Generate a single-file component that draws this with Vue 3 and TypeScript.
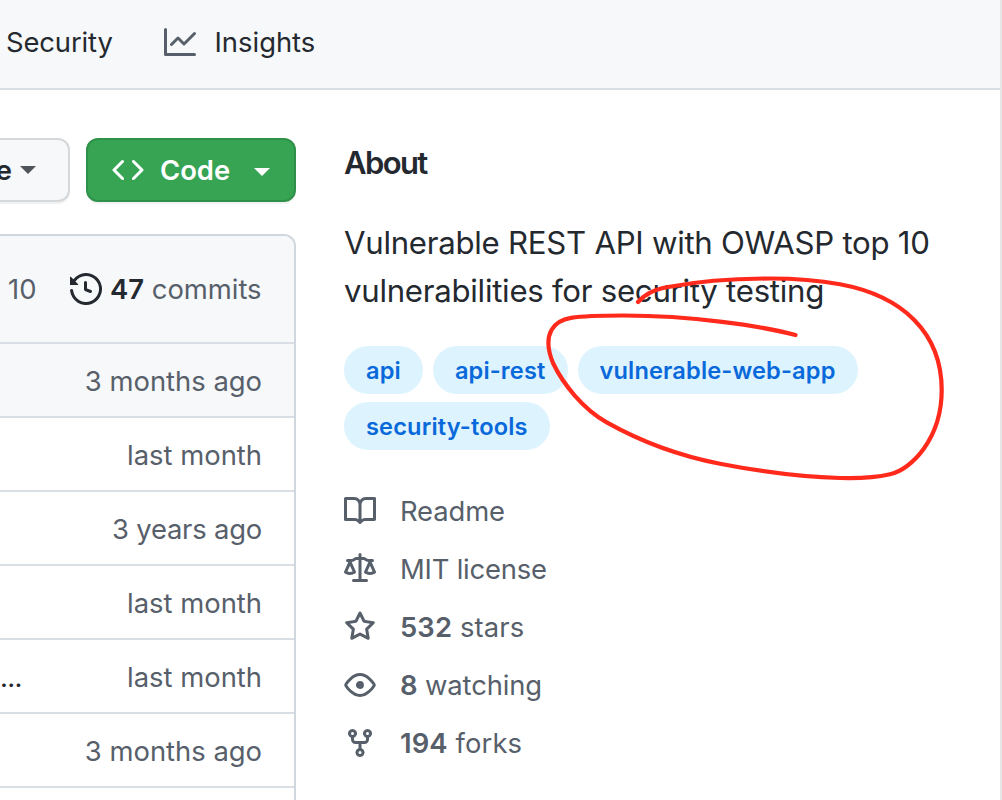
<script setup lang="ts">
const icons = {
  graph: 'M1.5 1.75V13.5h13.75a.75.75 0 0 1 0 1.5H.75a.75.75 0 0 1-.75-.75V1.75a.75.75 0 0 1 1.5 0Zm14.28 2.53-5.25 5.25a.75.75 0 0 1-1.06 0L7 7.06 4.28 9.78a.751.751 0 0 1-1.042-.018.751.751 0 0 1-.018-1.042l3.25-3.25a.75.75 0 0 1 1.06 0L10 7.94l4.72-4.72a.751.751 0 0 1 1.042.018.751.751 0 0 1 .018 1.042Z',
  code: 'm11.28 3.22 4.25 4.25a.75.75 0 0 1 0 1.06l-4.25 4.25a.749.749 0 0 1-1.275-.326.749.749 0 0 1 .215-.734L13.94 8l-3.72-3.72a.749.749 0 0 1 .326-1.275.749.749 0 0 1 .734.215Zm-6.56 0a.751.751 0 0 1 1.042.018.751.751 0 0 1 .018 1.042L2.06 8l3.72 3.72a.749.749 0 0 1-.326 1.275.749.749 0 0 1-.734-.215L.47 8.53a.75.75 0 0 1 0-1.06Z',
  history: 'm.427 1.927 1.215 1.215a8.002 8.002 0 1 1-1.6 5.685.75.75 0 1 1 1.493-.154 6.5 6.5 0 1 0 1.18-4.458l1.358 1.358A.25.25 0 0 1 3.896 6H.25A.25.25 0 0 1 0 5.75V2.104a.25.25 0 0 1 .427-.177ZM7.75 4a.75.75 0 0 1 .75.75v2.992l2.028.812a.75.75 0 0 1-.557 1.392l-2.5-1A.751.751 0 0 1 7 8.25v-3.5A.75.75 0 0 1 7.75 4Z',
  book: 'M0 1.75A.75.75 0 0 1 .75 1h4.253c1.227 0 2.317.59 3 1.501A3.743 3.743 0 0 1 11.006 1h4.245a.75.75 0 0 1 .75.75v10.5a.75.75 0 0 1-.75.75h-4.507a2.25 2.25 0 0 0-1.591.659l-.622.621a.75.75 0 0 1-1.06 0l-.622-.621A2.25 2.25 0 0 0 5.258 13H.75a.75.75 0 0 1-.75-.75Zm7.251 10.324.004-5.073-.002-2.253A2.25 2.25 0 0 0 5.003 2.5H1.5v9h3.757a3.75 3.75 0 0 1 1.994.574ZM8.755 4.75l-.004 7.322a3.752 3.752 0 0 1 1.992-.572H14.5v-9h-3.495a2.25 2.25 0 0 0-2.25 2.25Z',
  law: 'M8.75.75V2h.985c.304 0 .603.08.867.231l1.29.736c.038.022.08.033.124.033h2.234a.75.75 0 0 1 0 1.5h-.427l2.111 4.692a.75.75 0 0 1-.154.838l-.53-.53.529.531-.001.002-.002.002-.006.006-.006.005-.01.01-.045.04c-.21.176-.441.327-.686.45C14.556 10.78 13.88 11 13 11a4.498 4.498 0 0 1-2.023-.454 3.544 3.544 0 0 1-.686-.45l-.045-.04-.016-.015-.006-.006-.004-.004v-.001a.75.75 0 0 1-.154-.838L12.178 4.5h-.162c-.305 0-.604-.079-.868-.231l-1.29-.736a.245.245 0 0 0-.124-.033H8.75V13h2.5a.75.75 0 0 1 0 1.5h-6.5a.75.75 0 0 1 0-1.5h2.5V3.5h-.984a.245.245 0 0 0-.124.033l-1.289.737c-.265.15-.564.23-.869.23h-.162l2.112 4.692a.75.75 0 0 1-.154.838l-.53-.53.529.531-.001.002-.002.002-.006.006-.016.015-.045.04c-.21.176-.441.327-.686.45C4.556 10.78 3.88 11 3 11a4.498 4.498 0 0 1-2.023-.454 3.544 3.544 0 0 1-.686-.45l-.045-.04-.016-.015-.006-.006-.004-.004v-.001a.75.75 0 0 1-.154-.838L2.178 4.5H1.75a.75.75 0 0 1 0-1.5h2.234a.249.249 0 0 0 .125-.033l1.288-.737c.265-.15.564-.23.869-.23h.984V.75a.75.75 0 0 1 1.5 0Zm2.945 8.477c.285.135.718.273 1.305.273s1.02-.138 1.305-.273L13 6.327Zm-10 0c.285.135.718.273 1.305.273s1.02-.138 1.305-.273L3 6.327Z',
  star: 'M8 .25a.75.75 0 0 1 .673.418l1.882 3.815 4.21.612a.75.75 0 0 1 .416 1.279l-3.046 2.97.719 4.192a.751.751 0 0 1-1.088.791L8 12.347l-3.766 1.98a.75.75 0 0 1-1.088-.79l.72-4.194L.818 6.374a.75.75 0 0 1 .416-1.28l4.21-.611L7.327.668A.75.75 0 0 1 8 .25Zm0 2.445L6.615 5.5a.75.75 0 0 1-.564.41l-3.097.45 2.24 2.184a.75.75 0 0 1 .216.664l-.528 3.084 2.769-1.456a.75.75 0 0 1 .698 0l2.77 1.456-.53-3.084a.75.75 0 0 1 .216-.664l2.24-2.183-3.096-.45a.75.75 0 0 1-.564-.41L8 2.694Z',
  eye: 'M8 2c1.981 0 3.671.992 4.933 2.078 1.27 1.091 2.187 2.345 2.637 3.023a1.62 1.62 0 0 1 0 1.798c-.45.678-1.367 1.932-2.637 3.023C11.67 13.008 9.981 14 8 14c-1.981 0-3.671-.992-4.933-2.078C1.797 10.83.88 9.576.43 8.898a1.62 1.62 0 0 1 0-1.798c.45-.677 1.367-1.931 2.637-3.022C4.33 2.992 6.019 2 8 2ZM1.679 7.932a.12.12 0 0 0 0 .136c.411.622 1.241 1.75 2.366 2.717C5.176 11.758 6.527 12.5 8 12.5c1.473 0 2.825-.742 3.955-1.715 1.124-.967 1.954-2.096 2.366-2.717a.12.12 0 0 0 0-.136c-.412-.621-1.242-1.75-2.366-2.717C10.824 4.242 9.473 3.5 8 3.5c-1.473 0-2.825.742-3.955 1.715-1.124.967-1.954 2.096-2.366 2.717ZM8 10a2 2 0 1 1-.001-3.999A2 2 0 0 1 8 10Z',
  fork: 'M5 5.372v.878c0 .414.336.75.75.75h4.5a.75.75 0 0 0 .75-.75v-.878a2.25 2.25 0 1 1 1.5 0v.878a2.25 2.25 0 0 1-2.25 2.25h-1.5v2.128a2.251 2.251 0 1 1-1.5 0V8.5h-1.5A2.25 2.25 0 0 1 3.5 6.25v-.878a2.25 2.25 0 1 1 1.5 0ZM5 3.25a.75.75 0 1 0-1.5 0 .75.75 0 0 0 1.5 0Zm6.75.75a.75.75 0 1 0 0-1.5.75.75 0 0 0 0 1.5Zm-3 8.75a.75.75 0 1 0-1.5 0 .75.75 0 0 0 1.5 0Z',
}

interface FileRow {
  message: string
  age: string
  tight?: boolean
}

const files: FileRow[] = [
  { message: '', age: '3 months ago' },
  { message: '', age: 'last month' },
  { message: '', age: '3 years ago', tight: true },
  { message: '', age: 'last month' },
  { message: '...', age: 'last month' },
  { message: '', age: '3 months ago' },
  { message: '', age: '' },
]

const topics = ['api', 'api-rest', 'vulnerable-web-app', 'security-tools']

const facts = [
  { icon: icons.book, count: '', label: 'Readme', key: 'readme' },
  { icon: icons.law, count: '', label: 'MIT license', key: 'license' },
  { icon: icons.star, count: '532', label: 'stars', key: 'stars' },
  { icon: icons.eye, count: '8', label: 'watching', key: 'watching' },
  { icon: icons.fork, count: '194', label: 'forks', key: 'forks' },
]

// Hand-drawn loop around the highlighted topic.
const loopPath = [
  'M638 302C646 293 655 289.5 668 287',
  'C700 281 735 278.5 770 278.5',
  'C795 278.5 820 280.6 840 284.3',
  'C903 296 941.7 333 941.7 390',
  'C941.7 438 912 469.2 890 474.3',
  'C874 478 858 478.5 840 478',
  'C800 477 760 471.5 720 463.7',
  'C678 455.5 640 441 606.7 422.3',
  'C583 409 563 384 553 363',
  'C548.5 352 546.5 339 551.5 330',
  'C556 322 563 319 571 317.8',
  'C585 315.7 604 315.5 623 315.5',
  'C655 315.5 688 317.5 720 321.7',
  'C748 325 775 329.5 795.5 335',
].join('')
</script>

<template>
  <div class="page">
    <nav class="tabs">
      <span class="security">Security</span>
      <svg class="icon muted" viewBox="0 0 16 16"><path :d="icons.graph" /></svg>
      <span class="insights">Insights</span>
    </nav>
    <div class="content">
      <main class="left">
        <div class="actions">
          <button class="btn file-btn"><span>e</span><i class="caret"></i></button>
          <button class="btn code-btn">
            <svg class="icon" viewBox="0 0 16 16"><path :d="icons.code" /></svg>
            <span>Code</span><i class="caret"></i>
          </button>
        </div>
        <section class="files">
          <header class="commit-bar">
            <span class="date">10</span>
            <svg class="icon" viewBox="0 0 16 16"><path :d="icons.history" /></svg>
            <span class="commits"><b>47</b> commits</span>
          </header>
          <div v-for="(file, i) in files" :key="i" class="file-row">
            <span class="message">{{ file.message }}</span>
            <span class="age" :class="{ tight: file.tight }">{{ file.age }}</span>
          </div>
        </section>
      </main>
      <aside class="about">
        <h2>About</h2>
        <p class="desc">Vulnerable REST API with OWASP top 10<br />vulnerabilities for security testing</p>
        <div class="topics">
          <a v-for="topic in topics" :key="topic" class="topic">{{ topic }}</a>
        </div>
        <ul class="facts">
          <li v-for="fact in facts" :key="fact.key">
            <svg class="icon" viewBox="0 0 16 16"><path :d="fact.icon" /></svg>
            <span :class="fact.key"><b v-if="fact.count">{{ fact.count }}</b>{{ fact.count ? ' ' : '' }}{{ fact.label }}</span>
          </li>
        </ul>
      </aside>
    </div>
    <svg class="markup" viewBox="0 0 1002 800"><path :d="loopPath" /></svg>
  </div>
</template>

<style>
body { margin: 0; background: #fff; }
</style>

<style scoped>
.page {
  position: relative;
  box-sizing: border-box;
  width: 1002px;
  height: 800px;
  overflow: hidden;
  border-right: 2px solid #e6e6e6;
  background: #fff;
  color: #24292f;
  font: 27.4px/42px Inter, "Liberation Sans", sans-serif;
}
.icon { display: block; flex: none; width: 32px; height: 32px; fill: currentColor; }
.muted { color: #57606a; }
b { font-weight: 600; }
.tabs {
  display: flex;
  align-items: center;
  box-sizing: border-box;
  height: 90px;
  padding: 0 0 4px 6px;
  border-bottom: 2px solid #d8dee4;
  background: #f6f8fa;
}
.tabs .security { width: 158px; letter-spacing: -0.12px; }
.tabs .insights { margin-left: 18.5px; }
.content { display: flex; padding-top: 48px; }
.left { width: 296px; }
.actions { display: flex; gap: 16px; }
.btn {
  display: flex;
  align-items: center;
  box-sizing: border-box;
  height: 64px;
  margin: 0;
  font: inherit;
  font-weight: 600;
  border-radius: 12px;
  box-shadow: 0 2px 0 rgba(27, 31, 36, 0.06);
}
.file-btn {
  justify-content: flex-end;
  width: 70px;
  padding: 0 32px 0 0;
  border: 2px solid #d5d8da;
  border-left: 0;
  border-radius: 0 12px 12px 0;
  background: #f6f8fa;
  color: #24292f;
}
.caret { width: 0; height: 0; border: 8px solid transparent; border-bottom: 0; border-top-color: currentColor; }
.file-btn .caret { margin-left: 8px; color: #4f555b; }
.code-btn {
  width: 210px;
  padding: 0 24px;
  border: 2px solid #2f9149;
  background: #36a453;
  color: #fff;
}
.code-btn span { width: 94px; margin-left: 16px; text-align: left; }
.code-btn .caret { margin-top: 3px; }
.files {
  box-sizing: border-box;
  width: 296px;
  margin-top: 32px;
  overflow: hidden;
  border: 2px solid #d0d7de;
  border-left: 0;
  border-radius: 0 12px 0 0;
  color: #57606a;
}
.commit-bar { display: flex; align-items: center; height: 106px; padding-left: 8px; background: #f6f8fa; }
.commit-bar .date { width: 62px; }
.commit-bar .icon, .commit-bar b { color: #24292f; }
.commits { margin-left: 8px; white-space: nowrap; }
.file-row {
  display: flex;
  justify-content: space-between;
  box-sizing: border-box;
  height: 74px;
  padding: 16px 32px 16px 0;
  border-top: 2px solid #d8dee4;
}
.file-row:nth-child(2) { background: #f6f8fa; }
.message { color: #24292f; letter-spacing: -0.6px; }
.tight { letter-spacing: -0.2px; }
.about { margin-left: 48px; width: 620px; }
h2 { margin: 1px 0 0; font-size: 31px; line-height: 48px; font-weight: 600; letter-spacing: -1.6px; }
.desc { margin: 32px 0 0; font-size: 31.2px; line-height: 48px; letter-spacing: -0.27px; white-space: nowrap; }
.topics { display: flex; flex-wrap: wrap; gap: 8px 10px; width: 560px; margin-top: 31px; }
.topic {
  box-sizing: border-box;
  height: 48px;
  padding: 0 22px;
  border-radius: 24px;
  background: #ddf4ff;
  color: #0969da;
  font-size: 23.6px;
  line-height: 49px;
  font-weight: 600;
  letter-spacing: 0.14px;
  white-space: nowrap;
}
.facts { margin: 32px 0 0; padding: 0; list-style: none; color: #57606a; }
.facts li { display: flex; align-items: center; height: 58px; }
.facts .icon { margin-right: 24px; }
.license { letter-spacing: -0.2px; }
.readme, .watching { letter-spacing: -0.12px; }
.stars, .forks { letter-spacing: 0.12px; }
.markup { position: absolute; top: 0; left: 0; width: 1002px; height: 800px; pointer-events: none; }
.markup path { fill: none; stroke: #ff2a1c; stroke-width: 4.2; stroke-linecap: round; stroke-linejoin: round; }
</style>
